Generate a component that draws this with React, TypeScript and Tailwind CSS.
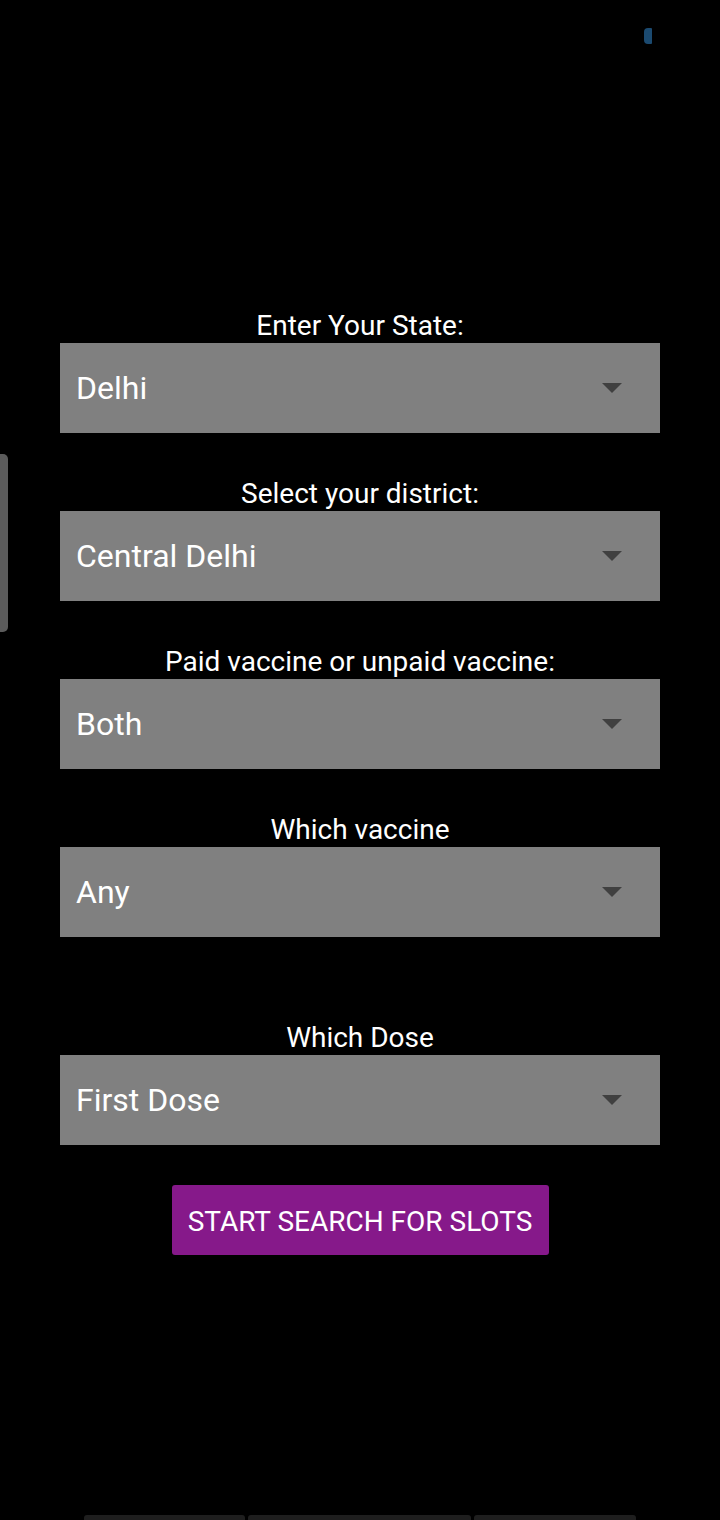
import { ReactNode } from "react";

type Field = {
  label: string;
  value: string;
  extraTop?: boolean;
};

const fields: Field[] = [
  { label: "Enter Your State:", value: "Delhi" },
  { label: "Select your district:", value: "Central Delhi" },
  { label: "Paid vaccine or unpaid vaccine:", value: "Both" },
  { label: "Which vaccine", value: "Any" },
  { label: "Which Dose", value: "First Dose", extraTop: true },
];

function Spinner({ value }: { value: string }) {
  return (
    <div className="flex h-[90px] w-[600px] items-center justify-between bg-[#808080] pl-[16px] pr-[38px]">
      <span className="text-[32px] leading-none text-white">{value}</span>
      {/* dropdown arrow */}
      <svg width="20" height="10" viewBox="0 0 20 10">
        <path d="M0 0 L20 0 L10 10 Z" fill="#404040" />
      </svg>
    </div>
  );
}

function Group({ label, children, extraTop }: { label: string; children: ReactNode; extraTop?: boolean }) {
  return (
    <div className={extraTop ? "mt-[84px] flex flex-col items-center" : "flex flex-col items-center"}>
      <div className="h-[34px] text-[28px] leading-[34px] text-white">{label}</div>
      {children}
    </div>
  );
}

export default function App() {
  return (
    <div
      className="relative h-[1520px] w-[720px] overflow-hidden bg-black"
      style={{ fontFamily: "Roboto, 'Noto Sans', sans-serif" }}
    >
      {/* status bar blip */}
      <div className="absolute left-[644px] top-[28px] h-[16px] w-[8px] rounded-l-[4px] rounded-r-[1px] bg-[#1b4a70]" />

      {/* edge handle */}
      <div className="absolute left-0 top-[454px] h-[178px] w-[8px] rounded-r-[5px] bg-[#5b5b5b]" />

      <div className="flex flex-col items-center pt-[309px]">
        <div className="flex flex-col gap-[44px]">
          {fields.slice(0, 4).map((f) => (
            <Group key={f.label} label={f.label}>
              <Spinner value={f.value} />
            </Group>
          ))}
        </div>
        <Group label={fields[4].label} extraTop>
          <Spinner value={fields[4].value} />
        </Group>

        <button className="mt-[40px] flex h-[70px] w-[377px] items-center justify-center rounded-[3px] bg-[#86198a] pt-[3px] text-[28px] text-white">
          START SEARCH FOR SLOTS
        </button>
      </div>

      {/* nav bar hints */}
      <div className="absolute bottom-0 left-[84px] flex gap-[3px]">
        <div className="h-[5px] w-[161px] rounded-t-[3px] bg-[#1e1e1e]" />
        <div className="h-[5px] w-[223px] rounded-t-[3px] bg-[#1e1e1e]" />
        <div className="h-[5px] w-[162px] rounded-t-[3px] bg-[#1e1e1e]" />
      </div>
    </div>
  );
}
